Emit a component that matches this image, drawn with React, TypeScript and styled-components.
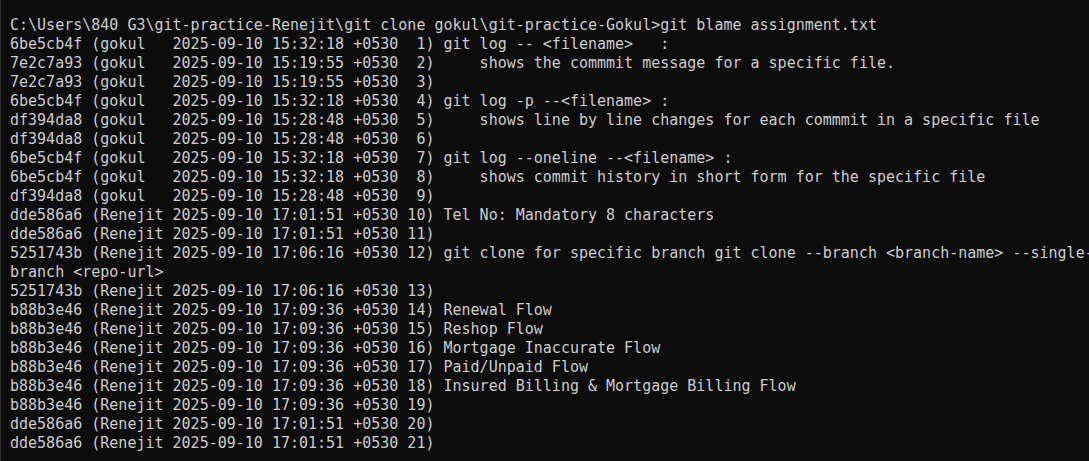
import React from "react";
import styled, { createGlobalStyle } from "styled-components";

const Global = createGlobalStyle`
  html, body { margin: 0; padding: 0; background: #0c0c0c; }
  #root { min-height: 100vh; }
`;

const Terminal = styled.div`
  box-sizing: border-box;
  width: 1089px;
  height: 461px;
  overflow: hidden;
  background: #0c0c0c;
  border-left: 1px solid #2a2a2a;
  padding: 16px 0 0 9px;
  display: flex;
  flex-direction: column;
`;

const Line = styled.div`
  font-family: "DejaVu Sans Mono", "Liberation Mono", monospace;
  font-size: 15px;
  line-height: 19px;
  height: 19px;
  color: #cccccc;
  white-space: pre;
`;

const lines = [
  "C:\\Users\\840 G3\\git-practice-Renejit\\git clone gokul\\git-practice-Gokul>git blame assignment.txt",
  "6be5cb4f (gokul   2025-09-10 15:32:18 +0530  1) git log -- <filename>   :",
  "7e2c7a93 (gokul   2025-09-10 15:19:55 +0530  2)     shows the commmit message for a specific file.",
  "7e2c7a93 (gokul   2025-09-10 15:19:55 +0530  3)",
  "6be5cb4f (gokul   2025-09-10 15:32:18 +0530  4) git log -p --<filename> :",
  "df394da8 (gokul   2025-09-10 15:28:48 +0530  5)     shows line by line changes for each commmit in a specific file",
  "df394da8 (gokul   2025-09-10 15:28:48 +0530  6)",
  "6be5cb4f (gokul   2025-09-10 15:32:18 +0530  7) git log --oneline --<filename> :",
  "6be5cb4f (gokul   2025-09-10 15:32:18 +0530  8)     shows commit history in short form for the specific file",
  "df394da8 (gokul   2025-09-10 15:28:48 +0530  9)",
  "dde586a6 (Renejit 2025-09-10 17:01:51 +0530 10) Tel No: Mandatory 8 characters",
  "dde586a6 (Renejit 2025-09-10 17:01:51 +0530 11)",
  "5251743b (Renejit 2025-09-10 17:06:16 +0530 12) git clone for specific branch git clone --branch <branch-name> --single-",
  "branch <repo-url>",
  "5251743b (Renejit 2025-09-10 17:06:16 +0530 13)",
  "b88b3e46 (Renejit 2025-09-10 17:09:36 +0530 14) Renewal Flow",
  "b88b3e46 (Renejit 2025-09-10 17:09:36 +0530 15) Reshop Flow",
  "b88b3e46 (Renejit 2025-09-10 17:09:36 +0530 16) Mortgage Inaccurate Flow",
  "b88b3e46 (Renejit 2025-09-10 17:09:36 +0530 17) Paid/Unpaid Flow",
  "b88b3e46 (Renejit 2025-09-10 17:09:36 +0530 18) Insured Billing & Mortgage Billing Flow",
  "b88b3e46 (Renejit 2025-09-10 17:09:36 +0530 19)",
  "dde586a6 (Renejit 2025-09-10 17:01:51 +0530 20)",
  "dde586a6 (Renejit 2025-09-10 17:01:51 +0530 21)",
];

export default function App() {
  return (
    <>
      <Global />
      <Terminal>
        {lines.map((l, i) => (
          <Line key={i}>{l}</Line>
        ))}
      </Terminal>
    </>
  );
}
